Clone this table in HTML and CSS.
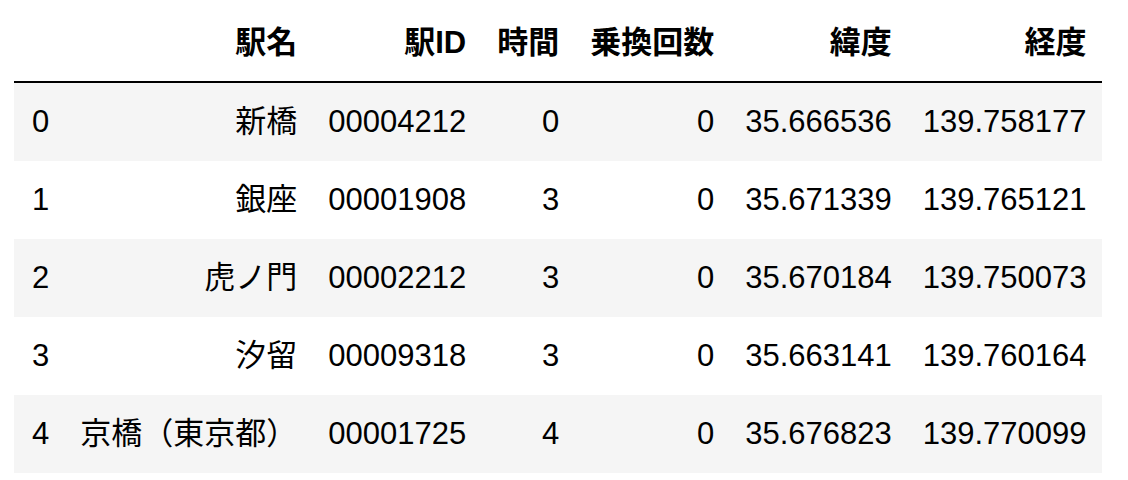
FILE: index.html
```html
<!DOCTYPE html>
<html lang="ja">
<head>
<meta charset="utf-8">
<link rel="stylesheet" href="styles.css">
</head>
<body>
<table class="df">
  <thead>
    <tr>
      <th class="idx"></th>
      <th>駅名</th>
      <th>駅ID</th>
      <th>時間</th>
      <th>乗換回数</th>
      <th>緯度</th>
      <th>経度</th>
    </tr>
  </thead>
  <tbody>
    <tr><td class="idx">0</td><td>新橋</td><td>00004212</td><td>0</td><td>0</td><td>35.666536</td><td>139.758177</td></tr>
    <tr><td class="idx">1</td><td>銀座</td><td>00001908</td><td>3</td><td>0</td><td>35.671339</td><td>139.765121</td></tr>
    <tr><td class="idx">2</td><td>虎ノ門</td><td>00002212</td><td>3</td><td>0</td><td>35.670184</td><td>139.750073</td></tr>
    <tr><td class="idx">3</td><td>汐留</td><td>00009318</td><td>3</td><td>0</td><td>35.663141</td><td>139.760164</td></tr>
    <tr><td class="idx">4</td><td>京橋（東京都）</td><td>00001725</td><td>4</td><td>0</td><td>35.676823</td><td>139.770099</td></tr>
  </tbody>
</table>
</body>
</html>
```
FILE: styles.css
```css
html, body {
  margin: 0;
  padding: 0;
  background: #ffffff;
}
body {
  padding-left: 14px;
  font-family: "Liberation Sans", "Noto Sans CJK JP", sans-serif;
  font-size: 31px;
  color: #000000;
}
.df {
  border-collapse: collapse;
  border-spacing: 0;
}
.df th,
.df td {
  text-align: right;
  vertical-align: middle;
  line-height: 36px;
  padding: 21px 15.5px;
  white-space: nowrap;
}
.df thead th {
  font-weight: bold;
  padding-top: 25px;
  padding-bottom: 20px;
  border-bottom: 2px solid #000000;
}
.df td.idx,
.df th.idx {
  text-align: left;
  padding-left: 18px;
}
.df tbody tr:nth-child(odd) {
  background: #f5f5f5;
}
```
